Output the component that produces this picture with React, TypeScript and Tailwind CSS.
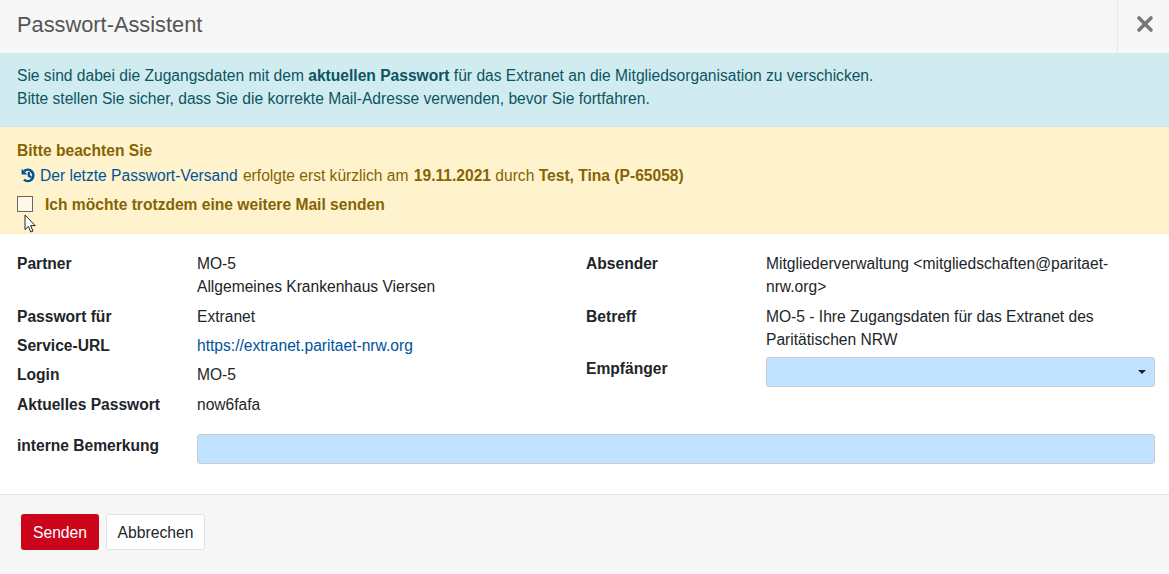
import { X } from 'lucide-react'

const leftRows = [
  { label: 'Passwort für', value: 'Extranet', gap: '' },
  { label: 'Service-URL', value: 'https://extranet.paritaet-nrw.org', link: true, gap: 'mt-[6px]' },
  { label: 'Login', value: 'MO-5', gap: 'mt-[6px]' },
  { label: 'Aktuelles Passwort', value: 'now6fafa', gap: 'mt-[7px]' },
]

const HistoryIcon = () => (
  <svg width="15" height="15" viewBox="0 0 15 15" fill="none" className="shrink-0">
    <path d="M3 3.2A5.6 5.6 0 1 1 3 11.6" stroke="#00529b" strokeWidth="2.6" />
    <path d="M0.6 0.8V6.6H6.4Z" fill="#00529b" />
    <path d="M7.8 4V7.8L10.4 9.4" stroke="#00529b" strokeWidth="2.2" />
  </svg>
)

const Cursor = () => (
  <svg width="14" height="20" viewBox="0 0 14 20" className="absolute left-[24px] top-[87px]">
    <path d="M1 1V15.5L4.4 12.4L6.8 18L9 17L6.6 11.6H11.2Z" fill="#fff" stroke="#222" strokeWidth="1" />
  </svg>
)

export default function App() {
  return (
    <div className="flex h-[574px] w-[1169px] flex-col overflow-hidden bg-white font-['Liberation_Sans',Arial,sans-serif] text-[15.6px] leading-[23px] text-[#212529]">
      <header className="flex h-[53px] shrink-0 items-stretch justify-between bg-[#f7f7f7]">
        <h1 className="pl-[17px] pt-[12px] text-[21.8px] leading-[25px] text-[#555]">Passwort-Assistent</h1>
        <div className="flex w-[52px] items-center justify-center border-l border-[#e7e7e7]">
          <X size={24} strokeWidth={3.6} className="mb-[5px] ml-[3px] text-[#777]" />
        </div>
      </header>

      <div className="h-[74px] shrink-0 border-b border-[#c3e6ed] bg-[#d1ecf1] px-[17px] pt-[11px] text-[#0c5460]">
        <p>
          Sie sind dabei die Zugangsdaten mit dem <strong>aktuellen Passwort</strong> für das Extranet an die
          Mitgliedsorganisation zu verschicken.
        </p>
        <p>Bitte stellen Sie sicher, dass Sie die korrekte Mail-Adresse verwenden, bevor Sie fortfahren.</p>
      </div>

      <div className="relative h-[107px] shrink-0 border-b border-[#fbeec4] bg-[#fff3cd] px-[17px] pt-[12px] text-[#856404]">
        <strong className="block">Bitte beachten Sie</strong>
        <p className="mt-[2px] flex items-center pl-[4px]">
          <HistoryIcon />
          <span className="ml-[4px] whitespace-pre">
            <span className="mr-[1px] text-[#00529b]">Der letzte Passwort-Versand</span> erfolgte erst kürzlich am{' '}
            <strong className="ml-[1px]">19.11.2021</strong> durch <strong>Test, Tina (P-65058)</strong>
          </span>
        </p>
        <label className="mt-[6px] flex items-center">
          <span className="mb-[2px] h-[16px] w-[16px] shrink-0 border-[1.5px] border-[#666] bg-[#fdf8e8]" />
          <strong className="ml-[12px]">Ich möchte trotzdem eine weitere Mail senden</strong>
        </label>
        <Cursor />
      </div>

      <main className="flex-1 pl-[17px] pr-[14px] pt-[18px]">
        <div className="flex">
          <div className="w-[569px] shrink-0">
            <div className="flex">
              <strong className="w-[180px] shrink-0">Partner</strong>
              <div>
                <div>MO-5</div>
                <div>Allgemeines Krankenhaus Viersen</div>
              </div>
            </div>
            <div className="mt-[7px]">
              {leftRows.map(row => (
                <div key={row.label} className={`flex ${row.gap}`}>
                  <strong className="w-[180px] shrink-0">{row.label}</strong>
                  <span className={row.link ? 'text-[#00529b]' : ''}>{row.value}</span>
                </div>
              ))}
            </div>
          </div>
          <div className="flex-1">
            <div className="flex">
              <strong className="w-[180px] shrink-0">Absender</strong>
              <div className="w-[370px]">Mitgliederverwaltung &lt;mitgliedschaften@paritaet-nrw.org&gt;</div>
            </div>
            <div className="mt-[7px] flex">
              <strong className="w-[180px] shrink-0">Betreff</strong>
              <div className="w-[370px]">MO-5 - Ihre Zugangsdaten für das Extranet des Paritätischen NRW</div>
            </div>
            <div className="mt-[6px] flex">
              <strong className="w-[180px] shrink-0">Empfänger</strong>
              <div className="flex h-[30px] w-[389px] items-center justify-end rounded-[3px] border border-[#ccc] bg-[#c0e1ff] pr-[8px]">
                <span className="h-0 w-0 border-x-[4px] border-t-[4px] border-x-transparent border-t-[#222]" />
              </div>
            </div>
          </div>
        </div>
        <div className="mt-[18px] flex">
          <strong className="w-[180px] shrink-0">interne Bemerkung</strong>
          <div className="h-[30px] flex-1 rounded-[3px] border border-[#ccc] bg-[#c0e1ff]" />
        </div>
      </main>

      <footer className="flex h-[80px] shrink-0 items-start gap-[7px] border-t border-[#e5e5e5] bg-[#f7f7f7] pl-[21px] pt-[19px]">
        <button type="button" className="h-[36px] w-[78px] rounded-[3px] bg-[#cc051c] text-[15.7px] text-white">
          Senden
        </button>
        <button type="button" className="h-[36px] w-[99px] rounded-[3px] border border-[#dee2e6] bg-white text-[15.7px] text-[#212529]">
          Abbrechen
        </button>
      </footer>
    </div>
  )
}
